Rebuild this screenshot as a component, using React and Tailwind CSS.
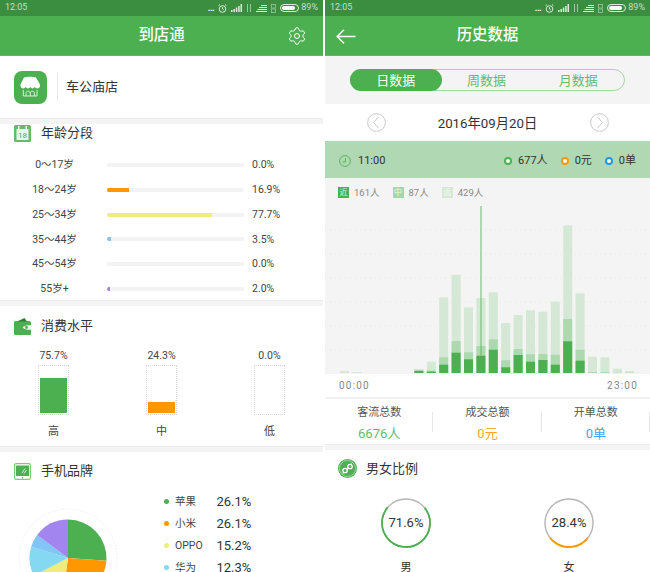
import { Settings } from 'lucide-react';

const AGES = [
  { label: '0～17岁', pct: '0.0%', w: 0, color: '' },
  { label: '18～24岁', pct: '16.9%', w: 16.2, color: 'bg-[#ff9800]' },
  { label: '25～34岁', pct: '77.7%', w: 77, color: 'bg-[#f0ec7e]' },
  { label: '35～44岁', pct: '3.5%', w: 3, color: 'bg-[#82c4f5]' },
  { label: '45～54岁', pct: '0.0%', w: 0, color: '' },
  { label: '55岁+', pct: '2.0%', w: 2, color: 'bg-[#9c82ea]' },
];

const SPEND = [
  { label: '高', pct: '75.7%', h: 35, color: 'bg-[#4caf50]' },
  { label: '中', pct: '24.3%', h: 11, color: 'bg-[#ff9800]' },
  { label: '低', pct: '0.0%', h: 0, color: '' },
];

const BRANDS = [
  { label: '苹果', pct: '26.1%', color: 'bg-[#4caf50]' },
  { label: '小米', pct: '26.1%', color: 'bg-[#ff9800]' },
  { label: 'OPPO', pct: '15.2%', color: 'bg-[#f0ec7e]' },
  { label: '华为', pct: '12.3%', color: 'bg-[#84d8f2]' },
];

// top of each stacked bar in chart px: far, mid, near (baseline 173)
const BARS = [
  [171, 173, 173], [172, 173, 173], [173, 173, 173], [173, 173, 173], [173, 173, 173], [173, 173, 173],
  [169, 170, 171], [161.7, 170.5, 171.7], [97.3, 157.3, 164.7], [74.7, 141, 152.7], [107.3, 152.3, 159.3],
  [98, 146, 155.7], [92.3, 139.3, 149.7], [123, 160.3, 167.3], [115, 149, 155], [110.3, 154.3, 161.7],
  [111.7, 154, 160], [101.7, 154.7, 164.7], [25.3, 119, 141.3], [93.3, 149.7, 160.7], [156.7, 172, 173],
  [157.3, 172, 173], [168.7, 172.7, 173], [171, 172.7, 173],
];

function polar(cx, cy, r, pct) {
  const a = (pct / 100) * 2 * Math.PI - Math.PI / 2;
  return [cx + r * Math.cos(a), cy + r * Math.sin(a)];
}

function StatusBar() {
  return (
    <div className="h-4 bg-[#3b8e3f] flex items-center justify-between pl-[5px] pr-[5px] text-[9px] text-[#c5dfc6]">
      <span>12:05</span>
      <div className="flex items-center gap-[4px]">
        <span className="font-bold leading-none tracking-tighter text-white">...</span>
        <svg width="9" height="9" viewBox="0 0 9 9" fill="none" stroke="#dcebdc" strokeWidth="1">
          <circle cx="4.5" cy="5" r="3.3" />
          <path d="M4.5 3.2V5L5.8 5.8M0.6 1.6 2 0.6M8.4 1.6 7 0.6" />
        </svg>
        <svg width="11" height="8" viewBox="0 0 11 8" fill="#dcebdc">
          <rect x="0" y="6" width="1.5" height="2" />
          <rect x="2.4" y="5" width="1.5" height="3" />
          <rect x="4.8" y="3.5" width="1.5" height="4.5" />
          <rect x="7.2" y="2" width="1.5" height="6" />
          <rect x="9.5" y="0" width="1.5" height="8" />
        </svg>
        <svg width="6" height="8" viewBox="0 0 6 8" stroke="#9cc79e" strokeWidth="1">
          <path d="M1.5 0V8M4.5 0V8" />
        </svg>
        <svg width="11" height="7" viewBox="0 0 11 7" fill="#dcebdc">
          <rect x="5" y="0" width="6" height="1" />
          <rect x="3" y="2" width="8" height="1" />
          <rect x="1.5" y="4" width="9.5" height="1" />
          <rect x="0" y="6" width="11" height="1" />
        </svg>
        <svg width="5" height="9" viewBox="0 0 5 9" stroke="#9cc79e" fill="none" strokeWidth="0.8">
          <rect x="0.5" y="0.5" width="4" height="3.5" />
          <rect x="0.5" y="5" width="4" height="3.5" />
        </svg>
        <div className="w-[19px] h-[8px] rounded-full border border-[#dcebdc] p-[1px]">
          <div className="h-full w-[85%] rounded-full bg-white" />
        </div>
        <span className="text-[9px] -ml-[2px]">89%</span>
      </div>
    </div>
  );
}

function Header({ title, left, right }) {
  return (
    <div className="h-[40px] bg-[#4caf50] border-b border-[#5cb85f] relative flex items-center justify-center">
      {left}
      <span className="pt-[1px] text-[15.4px] font-medium text-white">{title}</span>
      {right}
    </div>
  );
}

function SectionTitle({ icon, title }) {
  return (
    <div className="h-[18px] flex items-center gap-[10px] pl-[14px]">
      {icon}
      <span className="text-[13px] leading-[18px] text-[#333]">{title}</span>
    </div>
  );
}

function Gap() {
  return <div className="h-[6px] bg-[#f4f4f4] border-t border-[#ececec]" />;
}

function StoreIcon() {
  return (
    <svg width="33" height="33" viewBox="0 0 33 33">
      <rect width="33" height="33" rx="8" fill="#4caf50" />
      <path d="M10 6.5C13 5.6 19 5.6 22 6.5L26 13.5V14.5C26 16.5 24.8 17.5 23.4 17.5C22.2 17.5 21.3 16.8 20.9 15.8C20.5 16.8 19.6 17.5 18.6 17.5C17.6 17.5 16.8 16.8 16.3 15.8C15.8 16.8 15 17.5 14 17.5C13 17.5 12.1 16.8 11.7 15.8C11.3 16.8 10.4 17.5 9.2 17.5C7.8 17.5 6.5 16.5 6.5 14.5V13.5Z" fill="#fff" />
      <path d="M9.3 19V25H23V19M12 25V22.2C12 19.6 16.2 19.6 16.2 22.2V25M16.2 22.2C16.2 19.6 20.4 19.6 20.4 22.2V25" fill="none" stroke="#e8f5e9" strokeWidth="0.9" />
    </svg>
  );
}

function CalendarIcon() {
  return (
    <svg width="17" height="17" viewBox="0 0 17 17">
      <rect width="17" height="17" rx="1.5" fill="#66bb6a" />
      <rect x="2.5" y="4" width="12" height="11" fill="#e8f5e9" />
      <rect x="4" y="1" width="1.5" height="3.5" fill="#fff" />
      <rect x="11.5" y="1" width="1.5" height="3.5" fill="#fff" />
      <text x="8.5" y="13" textAnchor="middle" fontSize="8" fill="#4caf50">18</text>
    </svg>
  );
}

function WalletIcon() {
  return (
    <svg width="17" height="17" viewBox="0 0 17 17">
      <rect y="3" width="17" height="14" rx="1.5" fill="#4caf50" />
      <path d="M3 3.5 10.5 0 13 3.5Z" fill="#2e7d32" />
      <path d="M8.5 9.5C10 7.4 14 7 17 7.2V11.8C14 12 10 11.6 8.5 9.5Z" fill="#e8f5e9" />
      <circle cx="12.5" cy="9.5" r="1.4" fill="#4caf50" />
    </svg>
  );
}

function PhoneIcon() {
  return (
    <svg width="17" height="17" viewBox="0 0 17 17">
      <rect x="0.6" y="0.6" width="15.8" height="15.8" rx="1.5" fill="#fff" stroke="#7ccb7f" strokeWidth="1.2" />
      <rect x="2" y="2.5" width="13" height="10.5" fill="#4caf50" />
      <path d="M8 10 11 5.5M10 10.5 12.5 7" stroke="#d5ecd6" strokeWidth="1" />
      <circle cx="8.5" cy="14.8" r="0.8" fill="#4caf50" />
    </svg>
  );
}

function GenderIcon() {
  return (
    <svg width="19" height="19" viewBox="0 0 19 19">
      <circle cx="9.5" cy="9.5" r="9.5" fill="#4caf50" />
      <circle cx="9.5" cy="9.5" r="8" fill="none" stroke="#d5ecd6" strokeWidth="0.6" />
      <g fill="none" stroke="#fff" strokeWidth="1.3">
        <circle cx="7" cy="11.5" r="2.2" />
        <circle cx="12" cy="7.5" r="2.2" />
        <path d="M9 10 10 9" />
        <path d="M4.8 14.5 5.6 13.3M13.5 4.5 13.2 5.6" />
      </g>
    </svg>
  );
}

function PieSlices() {
  const slices = [
    [26.1, '#4caf50'], [26.1, '#ff9800'], [15.2, '#f0ec7e'], [12.3, '#84d8f2'], [5.5, '#82c4f5'], [14.8, '#a285ee'],
  ];
  let acc = 0;
  return slices.map(([v, color]) => {
    const [x1, y1] = polar(50, 50, 38.5, acc);
    acc += v;
    const [x2, y2] = polar(50, 50, 38.5, acc);
    return <path key={color} d={`M50 50L${x1} ${y1}A38.5 38.5 0 0 1 ${x2} ${y2}Z`} fill={color} />;
  });
}

function LeftPage() {
  return (
    <div className="w-[323px] h-[572px] overflow-hidden bg-white shrink-0">
      <StatusBar />
      <Header
        title="到店通"
        right={
          <Settings className="absolute right-[16px] top-[10px] text-white" size={20} strokeWidth={1.2} />
        }
      />
      <div className="h-[62px] flex items-center pl-[14px]">
        <StoreIcon />
        <div className="w-px h-[28px] bg-[#e8e8e8] ml-[10px] mr-[8px]" />
        <span className="text-[13px] text-[#333]">车公庙店</span>
      </div>
      <Gap />
      <SectionTitle icon={<CalendarIcon />} title="年龄分段" />
      <div className="pt-[11px] -mb-[1px] flex flex-col">
        {AGES.map(a => (
          <div key={a.label} className="h-[24.7px] flex items-center text-[10.5px] text-[#444]">
            <div className="w-[107px] text-center pl-[2px]">{a.label}</div>
            <div className="w-[137px] h-[4px] rounded-full bg-[#f3f3f3] overflow-hidden">
              {a.w > 0 && <div className={`h-full ${a.color}`} style={{ width: `${a.w}%` }} />}
            </div>
            <div className="ml-[8px]">{a.pct}</div>
          </div>
        ))}
      </div>
      <Gap />
      <div className="pt-[11px]">
        <SectionTitle icon={<WalletIcon />} title="消费水平" />
      </div>
      <div className="flex pt-[14px] pl-[38px] gap-[77px] h-[111px]">
        {SPEND.map(s => (
          <div key={s.label} className="w-[31px] flex flex-col items-center">
            <div className="text-[10.5px] leading-[14px] text-[#444] whitespace-nowrap">{s.pct}</div>
            <div className="mt-[2px] w-[31px] h-[50px] border border-dotted border-[#d8d8d8] p-[1px] flex items-end">
              {s.h > 0 && <div className={`w-full ${s.color}`} style={{ height: s.h }} />}
            </div>
            <div className="mt-[9px] text-[11px] leading-[16px] text-[#444]">{s.label}</div>
          </div>
        ))}
      </div>
      <Gap />
      <div className="pt-[10px]">
        <SectionTitle icon={<PhoneIcon />} title="手机品牌" />
      </div>
      <div className="relative">
        <svg className="absolute left-[18px] top-[28px]" width="100" height="100" viewBox="0 0 100 100">
          <circle cx="50" cy="50" r="49" fill="none" stroke="#dcdcdc" strokeWidth="0.7" strokeDasharray="1 2" />
          <PieSlices />
        </svg>
        <div className="pl-[164px] pt-[10px] flex flex-col">
          {BRANDS.map(b => (
            <div key={b.label} className="h-[22px] flex items-center">
              <span className={`w-[5px] h-[5px] rounded-full ${b.color}`} />
              <span className="ml-[6px] w-[41.5px] text-[10.5px] leading-[11px] text-[#444]">{b.label}</span>
              <span className="text-[13px] leading-[11px] text-[#333]">{b.pct}</span>
            </div>
          ))}
        </div>
      </div>
    </div>
  );
}

function Chart() {
  return (
    <svg className="block" width="325" height="174" viewBox="0 0 325 174">
      {[30, 54, 78, 102, 126, 150].map(y => (
        <line key={y} x1="0" x2="325" y1={y} y2={y} stroke="#e0ebe0" strokeWidth="1" strokeDasharray="1 4" />
      ))}
      {BARS.map((b, i) => {
        const x = 15 + i * 12.4;
        return (
          <g key={i}>
            <rect x={x} y={b[0]} width="9" height={173 - b[0]} fill="#d4e8d5" />
            <rect x={x} y={b[1]} width="9" height={173 - b[1]} fill="#acd9ae" />
            <rect x={x} y={b[2]} width="9" height={173 - b[2]} fill="#4caf50" />
          </g>
        );
      })}
      <line x1="156" x2="156" y1="6" y2="155.7" stroke="#66bb6a" strokeWidth="1" />
    </svg>
  );
}

function Ring({ pct, color, value, label }) {
  const r = 24;
  const c = 2 * Math.PI * r;
  const len = (pct / 100) * c;
  return (
    <div className="flex flex-col items-center w-[50px]">
      <div className="relative w-[50px] h-[50px]">
        <svg width="50" height="50" viewBox="0 0 50 50">
          <circle cx="25" cy="25" r={r} fill="none" stroke="#b5b5b5" strokeWidth="1.4" />
          <circle
            cx="25" cy="25" r={r} fill="none" stroke={color} strokeWidth="1.8"
            strokeDasharray={`${len} ${c}`}
            transform={`rotate(${90 - (pct / 100) * 180} 25 25)`}
          />
        </svg>
        <div className="absolute inset-0 flex items-center justify-center text-[13px] text-[#333]">{value}</div>
      </div>
      <div className="mt-[12px] text-[11px] text-[#333]">{label}</div>
    </div>
  );
}

function LegendDot({ color, text }) {
  return (
    <div className="flex items-center gap-[6px]">
      <span className={`w-[8px] h-[8px] rounded-full bg-white border-2 ${color}`} />
      <span>{text}</span>
    </div>
  );
}

function ChartKey({ color, text, value }) {
  return (
    <div className="flex items-center gap-[5px]">
      <span className={`w-[11px] h-[11px] flex items-center justify-center text-[8px] leading-none text-white/80 ${color}`}>{text}</span>
      <span>{value}</span>
    </div>
  );
}

function Stat({ title, value, color }) {
  return (
    <div className="flex-1 relative flex flex-col items-center pt-[6px]">
      <div className="absolute right-0 top-[13px] w-px h-[20px] bg-[#e6e6e6]" />
      <div className="text-[11px] text-[#555] leading-[16px]">{title}</div>
      <div className={`text-[13px] leading-[20px] mt-[3px] ${color}`}>{value}</div>
    </div>
  );
}

function RightPage() {
  return (
    <div className="w-[325px] h-[572px] overflow-hidden bg-white shrink-0">
      <StatusBar />
      <Header
        title="历史数据"
        left={
          <svg className="absolute left-[11px] top-[13px]" width="20" height="15" viewBox="0 0 20 15" fill="none" stroke="#fff" strokeWidth="1.5">
            <path d="M19.5 7.5H1.2M8 0.7 1.2 7.5 8 14.3" />
          </svg>
        }
      />
      <div className="h-[48px] bg-[#f4f4f4] flex items-center justify-center">
        <div className="w-[275px] h-[22px] rounded-full border border-[#a5d6a7] flex text-[13px] text-[#66bb6a]">
          <div className="flex-1 -m-px pt-[1px] rounded-full bg-[#4caf50] text-white flex items-center justify-center">日数据</div>
          <div className="flex-1 pt-[1px] flex items-center justify-center">周数据</div>
          <div className="flex-1 pt-[1px] flex items-center justify-center">月数据</div>
        </div>
      </div>
      <div className="h-[37px] flex items-center justify-center gap-[52px] text-[13.3px] text-[#333]">
        <svg width="19" height="19" viewBox="0 0 19 19" fill="none" stroke="#c4c4c4" strokeWidth="0.9">
          <circle cx="9.5" cy="9.5" r="8.9" />
          <path d="M11.5 4 6.5 9.5 11.5 15" />
        </svg>
        <span className="w-[100px] pt-[2px] text-center whitespace-nowrap">2016年09月20日</span>
        <svg width="19" height="19" viewBox="0 0 19 19" fill="none" stroke="#c4c4c4" strokeWidth="0.9">
          <circle cx="9.5" cy="9.5" r="8.9" />
          <path d="M7.5 4 12.5 9.5 7.5 15" />
        </svg>
      </div>
      <div className="h-[37px] pt-[3px] bg-[#b0d8b2] flex items-center justify-between pl-[14px] pr-[14px] text-[11px] text-[#333]">
        <div className="flex items-center gap-[7px]">
          <svg width="12" height="12" viewBox="0 0 12 12" fill="none" stroke="#5cb25f" strokeWidth="1">
            <circle cx="6" cy="6" r="5.4" />
            <path d="M6.5 3V7H3.5" />
          </svg>
          <span>11:00</span>
        </div>
        <div className="flex items-center gap-[13px]">
          <LegendDot color="border-[#4caf50]" text="677人" />
          <LegendDot color="border-[#ff9800]" text="0元" />
          <LegendDot color="border-[#2196f3]" text="0单" />
        </div>
      </div>
      <div className="bg-[#f4f4f4] h-[196px] flex flex-col">
        <div className="h-[22px] pt-[9px] flex items-start gap-[13px] pl-[13px] text-[9.5px] leading-[11px] text-[#888]">
          <ChartKey color="bg-[#4caf50]" text="近" value="161人" />
          <ChartKey color="bg-[#a5d6a7]" text="中" value="87人" />
          <ChartKey color="bg-[#d4e8d5]" text="远" value="429人" />
        </div>
        <Chart />
      </div>
      <div className="h-[23px] flex items-center justify-between pl-[14px] pr-[12px] text-[10px] tracking-[1.2px] text-[#888]">
        <span>00:00</span>
        <span>23:00</span>
      </div>
      <div className="h-[2px] bg-[#f0f0f0]" />
      <div className="h-[45px] flex">
        <Stat title="客流总数" value="6676人" color="text-[#66bb6a]" />
        <Stat title="成交总额" value="0元" color="text-[#ffa726]" />
        <Stat title="开单总数" value="0单" color="text-[#42a5f5]" />
      </div>
      <Gap />
      <div className="pt-[9px] h-[28px] flex items-center gap-[9px] pl-[13px]">
        <GenderIcon />
        <span className="text-[13px] text-[#333]">男女比例</span>
      </div>
      <div className="flex pl-[56px] pt-[20px] gap-[113px]">
        <Ring pct={71.6} color="#4caf50" value="71.6%" label="男" />
        <Ring pct={28.4} color="#ff9800" value="28.4%" label="女" />
      </div>
    </div>
  );
}

export default function App() {
  return (
    <div className="w-[650px] h-[572px] overflow-hidden flex gap-[2px] bg-white font-['Roboto','Noto_Sans_CJK_SC',sans-serif]">
      <LeftPage />
      <RightPage />
    </div>
  );
}
